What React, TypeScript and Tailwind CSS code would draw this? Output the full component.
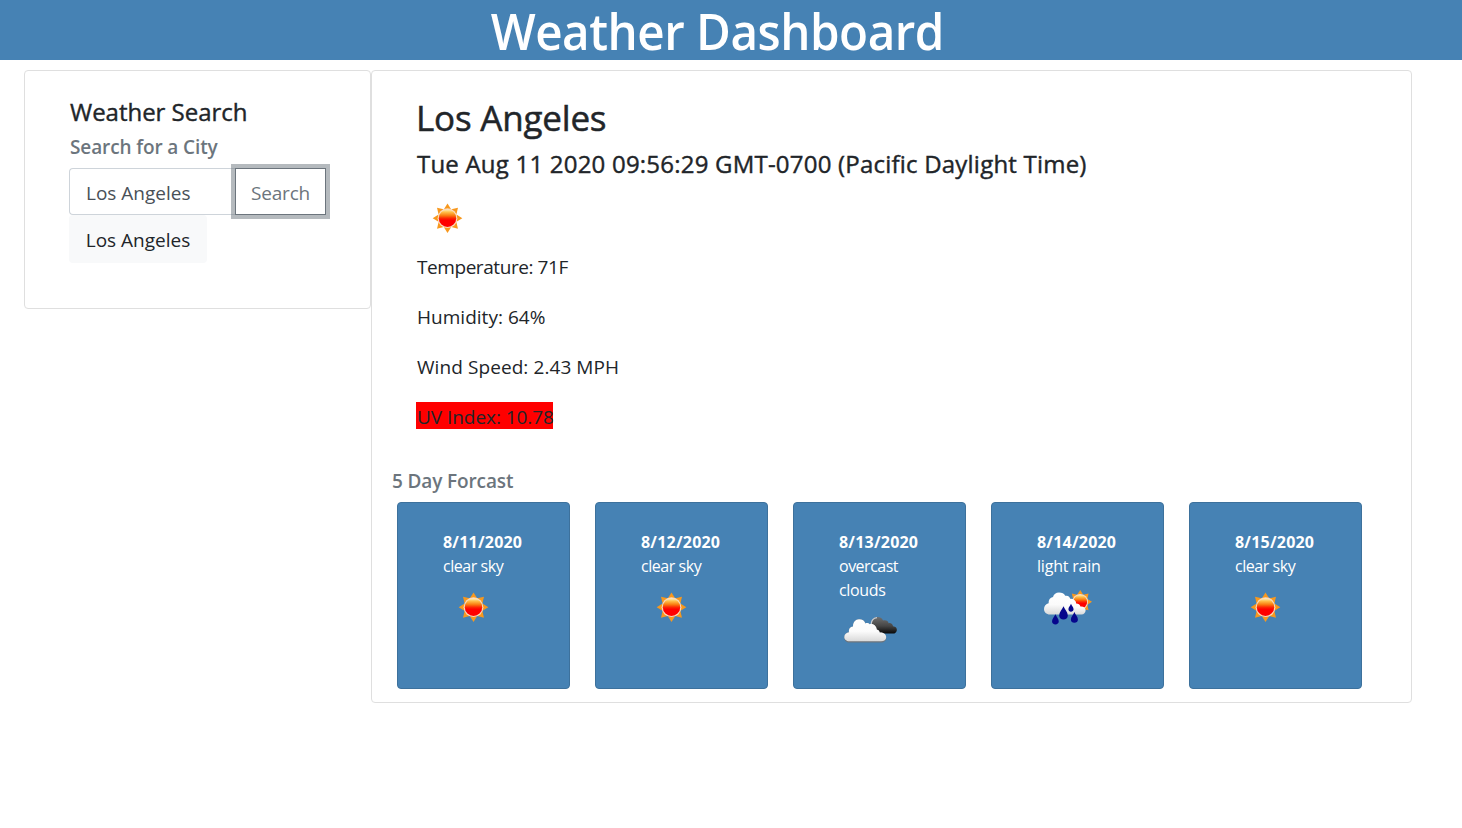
import React from "react";

type Kind = "sun" | "clouds" | "rain";

const days: { date: string; lines: { text: string; spacing: string }[]; kind: Kind }[] = [
  { date: "8/11/2020", lines: [{ text: "clear sky", spacing: "tracking-[-0.45px]" }], kind: "sun" },
  { date: "8/12/2020", lines: [{ text: "clear sky", spacing: "tracking-[-0.45px]" }], kind: "sun" },
  {
    date: "8/13/2020",
    lines: [
      { text: "overcast", spacing: "tracking-[-0.5px]" },
      { text: "clouds", spacing: "tracking-[-0.35px]" },
    ],
    kind: "clouds",
  },
  { date: "8/14/2020", lines: [{ text: "light rain", spacing: "tracking-[-0.2px]" }], kind: "rain" },
  { date: "8/15/2020", lines: [{ text: "clear sky", spacing: "tracking-[-0.45px]" }], kind: "sun" },
];

function SunShape({ id }: { id: string }) {
  return (
    <g>
      <defs>
        <linearGradient id={id} x1="0" y1="0" x2="0" y2="1">
          <stop offset="0" stopColor="#fff0b8" />
          <stop offset="0.15" stopColor="#ffc04a" />
          <stop offset="0.35" stopColor="#fa7a10" />
          <stop offset="0.5" stopColor="#fb2a04" />
          <stop offset="0.62" stopColor="#ff0000" />
          <stop offset="1" stopColor="#ff0000" />
        </linearGradient>
      </defs>
      {[0, 45, 90, 135, 180, 225, 270, 315].map((a) => (
        <path key={a} d="M-3.6 -9L0 -14.8L3.6 -9Z" fill="#f8981d" transform={`rotate(${a})`} />
      ))}
      <circle r="9.9" fill="#fbd9bd" />
      <circle r="8.7" fill={`url(#${id})`} />
    </g>
  );
}

function WeatherIcon({ kind, id }: { kind: Kind; id: string }) {
  return (
    <svg width="62" height="50" viewBox="0 0 62 50" className="block">
      <defs>
        <linearGradient id={`${id}-white`} x1="0" y1="0" x2="0" y2="1">
          <stop offset="0" stopColor="#ffffff" />
          <stop offset="0.55" stopColor="#fbfbfb" />
          <stop offset="1" stopColor="#d9d9d9" />
        </linearGradient>
        <linearGradient id={`${id}-dark`} x1="0" y1="0" x2="0" y2="1">
          <stop offset="0" stopColor="#707070" />
          <stop offset="0.55" stopColor="#454545" />
          <stop offset="1" stopColor="#080808" />
        </linearGradient>
      </defs>
      {kind === "sun" && (
        <g transform="translate(31.5 25.2)">
          <SunShape id={`${id}-sun`} />
        </g>
      )}
      {kind === "clouds" && (
        <g>
          <path
            d="M34 20C32.5 15.5 35 11 39.5 11C42 11 44 12 45 14.4C48 13.6 50.3 15 50.6 17.2C53 16.7 54.8 18.2 55 20.2C57.8 20.4 59.2 22.2 58.8 24.4C58.4 26.5 57 27.5 55 27.5H40Z"
            fill={`url(#${id}-dark)`}
          />
          <path d="M33.2 18C33.4 14.4 35.8 12 39 11.6" fill="none" stroke="#c9ccd0" strokeWidth="1.3" />
          <path
            d="M11.5 36.6C8.5 36.6 6.3 34.6 6.3 31.5C6.3 28.5 8.5 26.5 11 26.3C10.5 23 12 20.7 15 20.4C15 16.3 17.5 13.3 21 13.3C24.5 13.3 26.5 14.8 27.5 17.5C29 16.7 30.8 17.1 31.7 18.3C33.8 17.2 38.3 18.6 38.8 23.6C40.5 24 41.5 25 41.7 26.6C45.5 26.4 48.2 28.8 48.2 31.8C48.2 34.9 46 36.6 43 36.6Z"
            fill="#6d747b"
          />
          <path
            d="M11.5 35.2C8.5 35.2 6.3 33.6 6.3 31C6.3 28.2 8.5 26.5 11 26.3C10.5 23 12 20.7 15 20.4C15 16.3 17.5 13.3 21 13.3C24.5 13.3 26.5 14.8 27.5 17.5C29 16.7 30.8 17.1 31.7 18.3C33.8 17.2 38.3 18.6 38.8 23.6C40.5 24 41.5 25 41.7 26.6C45.5 26.4 48.2 28.4 48.2 31.2C48.2 33.8 46 35.2 43 35.2Z"
            fill={`url(#${id}-white)`}
          />
        </g>
      )}
      {kind === "rain" && (
        <g>
          <g transform="translate(44.2 19.8) scale(0.8)">
            <SunShape id={`${id}-sun`} />
          </g>
          <path
            d="M14 32.5C10.3 32.5 8 30 8 27C8 24 10 21.8 12.6 21.2C12.4 17.8 14.1 15.6 17 15C17.8 12.2 20 10.6 23 10.6C26 10.6 28.2 11.8 29.2 13.8C32.5 13.2 34.4 15.4 34.4 18.4C36 22 35 32 30 32.5Z"
            fill={`url(#${id}-white)`}
          />
          <path
            d="M29 32.5C26.8 31.8 25.8 29.7 26.2 27.5C26.5 25.7 27.6 24.6 29 24.4C28.6 19.8 31.2 16.8 34.6 16.8C38 16.8 40 18.9 40.2 21.5C42.4 21.5 44.1 22.8 44.4 24.5C48 24.2 49.7 26.2 49.6 28.6C49.5 31 48 32.5 45.5 32.5Z"
            fill={`url(#${id}-white)`}
          />
          {[
            [19.4, 37.6, 1.05],
            [27.5, 31.3, 1.35],
            [38.4, 35.8, 1.1],
            [35, 26, 0.8],
          ].map(([x, y, s]) => (
            <path
              key={x}
              d="M0 -5.2C0.9 -2.8 3.2 -0.8 3.2 1.6C3.2 3.6 1.8 4.6 0 4.6C-1.8 4.6 -3.2 3.6 -3.2 1.6C-3.2 -0.8 -0.9 -2.8 0 -5.2Z"
              fill="#06068c"
              transform={`translate(${x} ${y}) scale(${s})`}
            />
          ))}
        </g>
      )}
    </svg>
  );
}

function SearchPanel() {
  return (
    <aside className="h-[239px] w-[347px] shrink-0 rounded border border-[#dfdfdf] px-11 pt-[27px]">
      <h2 className="pl-px text-2xl leading-7 font-medium tracking-[-0.02px] [-webkit-text-stroke:0.4px_#212529]">
        Weather Search
      </h2>
      <h3 className="mt-[9px] pl-px text-[19px] leading-6 font-semibold tracking-[-0.12px] text-[#6c757d]">
        Search for a City
      </h3>
      <div className="mt-[9px] flex h-[47px]">
        <input
          defaultValue="Los Angeles"
          className="h-full w-[166px] rounded-l border border-r-0 border-[#ced4da] bg-white pt-0.5 pl-4 text-[19px] text-[#495057] outline-none"
        />
        <button className="h-full w-[91px] border border-[#6c757d] bg-white pt-1 text-[19px] tracking-[-0.2px] text-[#6c757d] ring-4 ring-[#6c757d]/50">
          Search
        </button>
      </div>
      <button className="h-12 w-[138px] rounded bg-[#f8f9fa] pt-[3px] text-[19px]">Los Angeles</button>
    </aside>
  );
}

function ForecastPanel() {
  return (
    <main className="h-[633px] w-[1041px] shrink-0 rounded border border-[#dfdfdf] pt-[26px]">
      <section className="pl-[45px]">
        <h2 className="-ml-px text-[35px] leading-[42px] font-medium tracking-[-0.2px] [-webkit-text-stroke:0.5px_#212529]">
          Los Angeles
        </h2>
        <h3 className="mt-2.5 text-2xl leading-[30px] font-medium tracking-[0.21px] [-webkit-text-stroke:0.4px_#212529]">
          Tue Aug 11 2020 09:56:29 GMT-0700 (Pacific Daylight Time)
        </h3>
        <div className="mt-3.5 -ml-px">
          <WeatherIcon kind="sun" id="now" />
        </div>
        <div className="mt-[9px] flex flex-col items-start gap-5 text-[19px] leading-[30px]">
          <p className="tracking-[-0.43px]">Temperature: 71F</p>
          <p className="tracking-[0.02px]">Humidity: 64%</p>
          <p className="tracking-[0.08px]">Wind Speed: 2.43 MPH</p>
          <p className="-ml-px h-[27px] w-[137px] bg-[#ff0000] pl-px leading-[31px] tracking-[-0.05px] whitespace-nowrap">
            UV Index: 10.78
          </p>
        </div>
      </section>
      <h3 className="mt-10 pl-5 text-[19px] leading-6 font-semibold tracking-[-0.13px] text-[#6c757d]">
        5 Day Forcast
      </h3>
      <div className="mt-[9px] flex gap-[25px] pl-[25px]">
        {days.map((d, i) => (
          <article
            key={d.date}
            className="h-[187px] w-[173px] rounded border border-[#3d719c] bg-[#4682b4] pt-[27px] pl-[45px] leading-6 text-white"
          >
            <p className="font-bold tracking-[0.22px]">{d.date}</p>
            {d.lines.map((l) => (
              <p key={l.text} className={l.spacing}>
                {l.text}
              </p>
            ))}
            <div className="mt-1 -ml-px">
              <WeatherIcon kind={d.kind} id={`day${i}`} />
            </div>
          </article>
        ))}
      </div>
    </main>
  );
}

export default function App() {
  return (
    <div className="min-h-screen bg-white font-['Open_Sans','Noto_Sans',sans-serif] text-[#212529]">
      <header className="flex h-[60px] justify-center bg-[#4682b4] pr-[27px]">
        <h1 className="scale-x-[0.951] pt-px text-[50px] leading-[60px] font-semibold tracking-[-0.5px] whitespace-nowrap text-white">
          Weather Dashboard
        </h1>
      </header>
      <div className="flex items-start pt-2.5 pl-6">
        <SearchPanel />
        <ForecastPanel />
      </div>
    </div>
  );
}
